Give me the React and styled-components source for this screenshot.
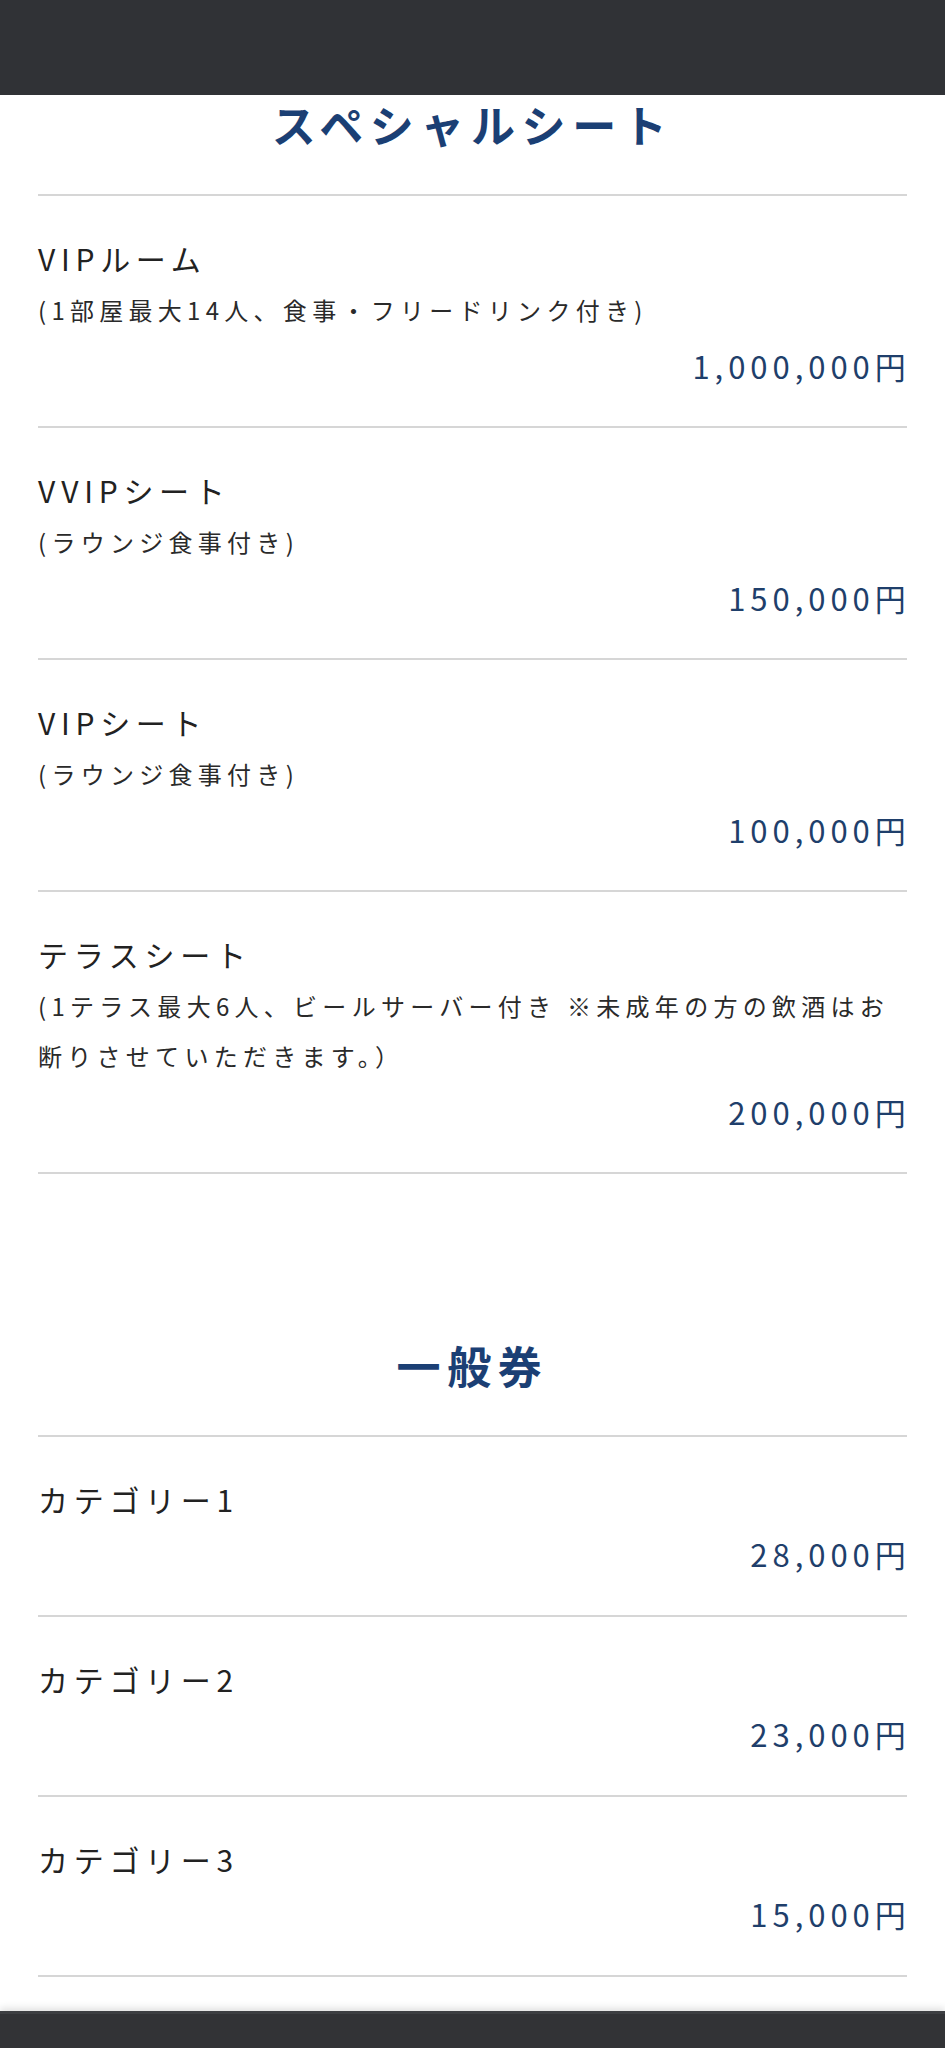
import React from "react";
import styled, { createGlobalStyle } from "styled-components";

const GlobalStyle = createGlobalStyle`
  html, body {
    margin: 0;
    padding: 0;
    background: #ffffff;
  }
  body {
    font-family: "Noto Sans CJK JP", "Noto Sans", sans-serif;
    -webkit-font-smoothing: antialiased;
  }
  * { box-sizing: border-box; }
`;

const Page = styled.div`
  display: flex;
  flex-direction: column;
  min-height: 100vh;
`;

const Header = styled.header`
  height: 95px;
  background: #303236;
  flex-shrink: 0;
`;

const Main = styled.main`
  flex: 1;
  padding: 0 38px 34px;
`;

const Section = styled.section`
  margin-top: ${(p) => p.$gap || 0}px;
`;

const SectionTitle = styled.h2`
  margin: 0;
  padding-bottom: 41px;
  font-size: 44px;
  line-height: 58px;
  font-weight: 700;
  letter-spacing: 0.15em;
  color: #1b3f74;
  text-align: center;
`;

const List = styled.ul`
  list-style: none;
  margin: 0;
  padding: 0;
  border-top: 2px solid #d6d6d6;
`;

const Item = styled.li`
  display: flex;
  flex-direction: column;
  padding: 38px 0 ${(p) => (p.$roomy ? 37 : 36)}px;
  border-bottom: 2px solid #d6d6d6;
`;

const ItemName = styled.div`
  font-size: 30px;
  line-height: 48px;
  letter-spacing: 0.19em;
  color: #222222;
`;

const ItemNote = styled.div`
  margin-top: 3px;
  font-size: 24px;
  line-height: 50px;
  letter-spacing: 0.22em;
  color: #2a2a2a;
`;

const Price = styled.div`
  margin-top: 7px;
  margin-right: -0.12em;
  font-size: 31px;
  line-height: 48px;
  letter-spacing: 0.16em;
  color: #1f3f6b;
  text-align: right;
`;

const Footer = styled.footer`
  height: 38px;
  flex-shrink: 0;
  background: #323336;
  border-top: 3px solid #3d3f42;
  box-shadow: 0 -3px 7px rgba(0, 0, 0, 0.12);
`;

const special = [
  { name: "VIPルーム", note: "(1部屋最大14人、食事・フリードリンク付き)", price: "1,000,000円" },
  { name: "VVIPシート", note: "(ラウンジ食事付き)", price: "150,000円" },
  { name: "VIPシート", note: "(ラウンジ食事付き)", price: "100,000円" },
  {
    name: "テラスシート",
    note: "(1テラス最大6人、ビールサーバー付き ※未成年の方の飲酒はお断りさせていただきます。）",
    price: "200,000円",
  },
];

const general = [
  { name: "カテゴリー1", price: "28,000円" },
  { name: "カテゴリー2", price: "23,000円" },
  { name: "カテゴリー3", price: "15,000円" },
];

function TicketList({ items, roomy }) {
  return (
    <List>
      {items.map((it) => (
        <Item key={it.name} $roomy={roomy}>
          <ItemName>{it.name}</ItemName>
          {it.note && <ItemNote>{it.note}</ItemNote>}
          <Price>{it.price}</Price>
        </Item>
      ))}
    </List>
  );
}

export default function App() {
  return (
    <Page>
      <GlobalStyle />
      <Header />
      <Main>
        <Section>
          <SectionTitle>スペシャルシート</SectionTitle>
          <TicketList items={special} />
        </Section>
        <Section $gap={162}>
          <SectionTitle>一般券</SectionTitle>
          <TicketList items={general} roomy />
        </Section>
      </Main>
      <Footer />
    </Page>
  );
}
